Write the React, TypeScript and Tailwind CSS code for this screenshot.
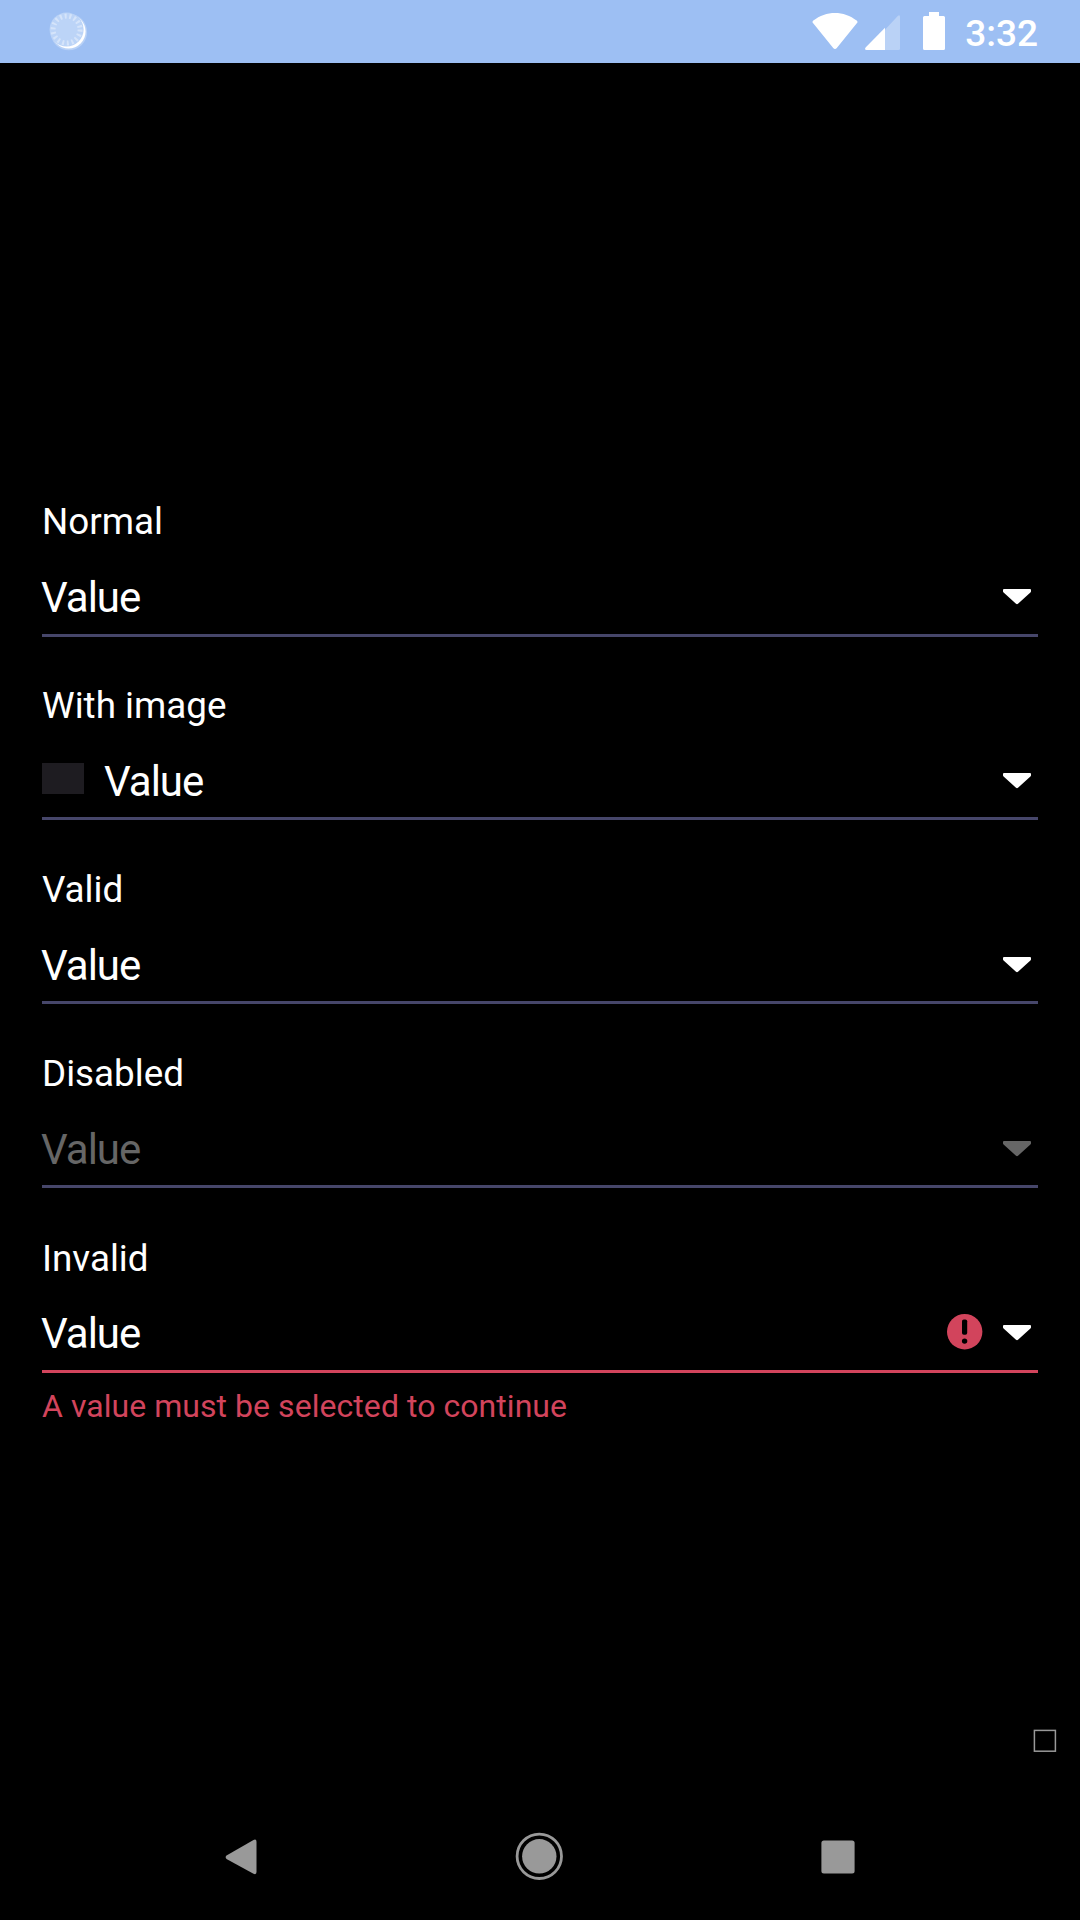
import React from "react";

type FieldProps = {
  label: string;
  labelClass?: string;
  rowClass?: string;
  lineClass?: string;
  valueClass?: string;
  arrowClass?: string;
  image?: boolean;
  invalid?: boolean;
};

function Caret({ className }: { className: string }) {
  return (
    <svg width="28" height="16" viewBox="0 0 28 16" className={className} fill="currentColor">
      <path d="M1 0H27Q28 0 28 1V2.2Q28 3 27.4 3.5L15 14.8Q14 15.7 13 14.8L.6 3.5Q0 3 0 2.2V1Q0 0 1 0Z" />
    </svg>
  );
}

function ErrorIcon() {
  return (
    <svg width="36" height="36" viewBox="0 0 36 36" className="mr-5">
      <circle cx="17.7" cy="17.7" r="17.7" fill="#d2445c" />
      <rect x="15" y="5.4" width="5.2" height="15.4" rx="1.8" fill="#000" />
      <circle cx="17.6" cy="27.1" r="2.7" fill="#000" />
    </svg>
  );
}

function Field({
  label,
  labelClass = "h-[72px]",
  rowClass = "h-[61px]",
  lineClass = "bg-[#46466a]",
  valueClass = "text-white",
  arrowClass = "text-white",
  image,
  invalid,
}: FieldProps) {
  return (
    <div>
      <div className={`text-[36.8px] leading-[42px] text-white ${labelClass}`}>{label}</div>
      <div className={`flex items-start ${rowClass}`}>
        {image && <div className="mt-[6px] mr-[21px] h-[31px] w-[42px] bg-[#1e1c21]" />}
        <div className={`-ml-px flex-1 text-[42px] leading-[50px] tracking-[-1px] ${valueClass}`}>Value</div>
        <div className="mr-[7px] flex">
          {invalid && (
            <div className="mt-[5px]">
              <ErrorIcon />
            </div>
          )}
          <Caret className={`mt-4 ${arrowClass}`} />
        </div>
      </div>
      <div className={`h-[3px] ${lineClass}`} />
    </div>
  );
}

function StatusBar() {
  return (
    <header className="flex h-[63px] items-start bg-[#9dbff3] pl-[49px] text-white">
      <svg width="40" height="40" viewBox="0 0 40 40" className="mt-[12px]">
        <circle cx="19.8" cy="20" r="18.3" fill="#fff" opacity=".28" />
        <circle cx="19.6" cy="19.6" r="17" fill="#fff" />
        <circle cx="17.6" cy="17.6" r="17" fill="#bcd4f7" />
        <circle
          cx="17.6"
          cy="17.6"
          r="13.5"
          fill="none"
          stroke="#d5e4fa"
          strokeWidth="5"
          strokeDasharray="2 2.712"
        />
      </svg>
      <div className="ml-auto mr-[42px] flex items-start">
        <svg width="46" height="38" viewBox="0 0 46 38" className="mt-[12px]" fill="currentColor">
          <path d="M.8 10.8Q0 9.6 1.3 8.6C14-1.7 32-1.7 44.7 8.6Q46 9.6 45.2 10.8L25 35.8Q23 38.2 21 35.8Z" />
        </svg>
        <svg width="36" height="36" viewBox="0 0 36 36" className="ml-[7px] mt-[15px]" fill="currentColor">
          <path d="M20 14.8L33 .7Q35 -.8 35 2V33.5Q35 35 33.5 35H20Z" opacity=".3" />
          <path d="M20 12.8V35H1.5Q-.8 35 .6 32.5Z" />
        </svg>
        <svg width="22" height="38" viewBox="0 0 22 38" className="ml-[22px] mt-[12px]" fill="currentColor">
          <path d="M6 0H16V4H20.5Q22 4 22 5.5V36.5Q22 38 20.5 38H1.5Q0 38 0 36.5V5.5Q0 4 1.5 4H6Z" />
        </svg>
        <div className="ml-[20px] mt-[13px] text-[37px] font-medium leading-[42px]">3:32</div>
      </div>
    </header>
  );
}

function NavBar() {
  return (
    <nav className="flex h-[48px] items-start pl-[225px] text-[#999999]">
      <svg width="33" height="37" viewBox="0 0 33 37" className="mt-[7px]" fill="currentColor">
        <path d="M1.5 16.6L28.5 .9Q31.5 -.3 31.5 2.7V33Q31.5 36 28.5 34.8L1.5 19.9Q-.2 18.2 1.5 16.6Z" />
      </svg>
      <svg width="48" height="48" viewBox="0 0 48 48" className="ml-[257px]" fill="currentColor">
        <circle cx="24.3" cy="24.3" r="22.2" fill="none" stroke="currentColor" strokeWidth="2.8" />
        <circle cx="24.3" cy="24.3" r="17.2" />
      </svg>
      <svg width="34" height="34" viewBox="0 0 34 34" className="ml-[258px] mt-2" fill="currentColor">
        <rect x=".4" y=".4" width="33.2" height="33.2" rx="2.5" />
      </svg>
    </nav>
  );
}

export default function App() {
  return (
    <div className="flex h-[1920px] w-[1080px] flex-col overflow-hidden bg-black font-[Roboto,sans-serif]">
      <StatusBar />
      <main className="flex h-[990px] flex-col px-[42px] pt-[438px]">
        <div className="flex flex-col gap-[48px]">
          <Field label="Normal" />
          <Field label="With image" image rowClass="h-[60px]" />
          <Field label="Valid" labelClass="mt-px h-[72px]" rowClass="h-[60px]" />
          <Field
            label="Disabled"
            labelClass="mt-px h-[72px]"
            rowClass="h-[60px]"
            valueClass="text-[#666666]"
            arrowClass="text-[#666666]"
          />
          <Field
            label="Invalid"
            labelClass="mt-[2px] h-[71px]"
            rowClass="h-[61px]"
            lineClass="bg-[#d2445c]"
            invalid
          />
        </div>
        <p className="mt-[14px] text-[32px] leading-[38px] tracking-[0.05px] text-[#d2445c]">
          A value must be selected to continue
        </p>
      </main>
      <svg width="24" height="24" viewBox="0 0 24 24" className="mt-[676px] mr-[23px] shrink-0 self-end">
        <rect x="1.4" y="1.4" width="21" height="20.8" fill="none" stroke="#999999" strokeWidth="1.5" />
      </svg>
      <div className="mt-[79px]">
        <NavBar />
      </div>
    </div>
  );
}
